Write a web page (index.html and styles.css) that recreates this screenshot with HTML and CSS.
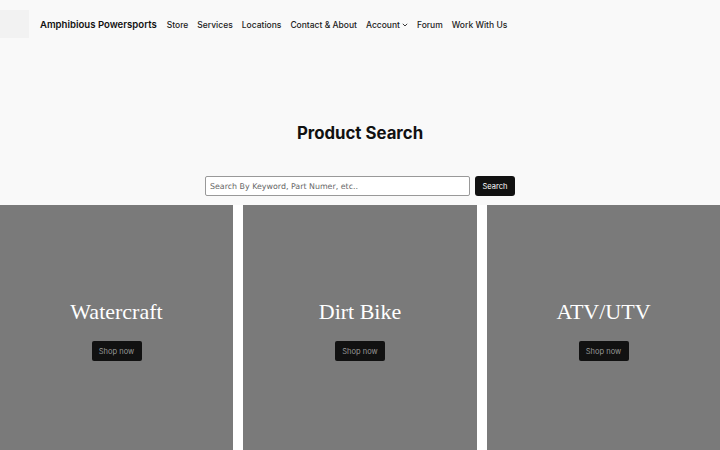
FILE: index.html
```html
<!DOCTYPE html>
<html>
<head>
<meta charset="utf-8">
<link rel="stylesheet" href="styles.css">
</head>
<body>
<header class="site-header">
  <div class="logo"></div>
  <div class="site-title">Amphibious Powersports</div>
  <nav class="nav">
    <a>Store</a>
    <a>Services</a>
    <a>Locations</a>
    <a>Contact &amp; About</a>
    <a class="has-sub">Account <svg width="6" height="4" viewBox="0 0 6 4"><path d="M0.8 0.8 L3 3 L5.2 0.8" fill="none" stroke="#222" stroke-width="0.9"/></svg></a>
    <a>Forum</a>
    <a>Work With Us</a>
  </nav>
</header>
<main>
  <section class="search-section">
    <h1 class="search-title">Product Search</h1>
    <form class="search-form">
      <input class="search-input" type="text" placeholder="Search By Keyword, Part Numer, etc..">
      <button class="search-btn" type="button">Search</button>
    </form>
  </section>
  <section class="cards">
    <div class="card"><h2 class="card-title">Watercraft</h2><a class="shop-btn">Shop now</a></div>
    <div class="card"><h2 class="card-title">Dirt Bike</h2><a class="shop-btn">Shop now</a></div>
    <div class="card"><h2 class="card-title">ATV/UTV</h2><a class="shop-btn">Shop now</a></div>
  </section>
</main>
</body>
</html>
```
FILE: styles.css
```css
* { box-sizing: border-box; }
html, body { margin: 0; padding: 0; }
body {
  background: #f9f9f9;
  font-family: Inter, "Noto Sans", sans-serif;
  color: #111;
  width: 720px;
  height: 450px;
  overflow: hidden;
}
.site-header {
  display: flex;
  align-items: center;
  height: 48px;
}
.logo {
  width: 29px;
  height: 28px;
  background: #f2f2f2;
  margin-right: 11px;
}
.site-title {
  font-size: 9.6px;
  font-weight: 600;
  color: #111;
  margin-right: 10px;
  padding-top: 1px;
}
.nav {
  display: flex;
  gap: 9px;
  font-size: 8.5px;
  font-weight: 500;
  color: #222;
  padding-top: 1px;
}
.nav a { display: flex; align-items: center; gap: 2px; }
.search-section {
  display: flex;
  flex-direction: column;
  align-items: center;
  padding-top: 75px;
  height: 157px;
}
.search-title {
  margin: 0;
  font-size: 16.8px;
  font-weight: 700;
  line-height: 20px;
}
.search-form {
  display: flex;
  gap: 5px;
  margin-top: 33px;
}
.search-input {
  width: 265px;
  height: 20px;
  border: 1px solid #999;
  border-radius: 2px;
  background: #fff;
  font-family: "DejaVu Sans", sans-serif;
  font-size: 7.9px;
  padding: 0 4px;
  outline: none;
}
.search-input::placeholder { color: #666; }
.search-btn {
  width: 40px;
  height: 20px;
  background: #111;
  color: #fff;
  border: none;
  border-radius: 3px;
  font-family: Inter, "Liberation Sans", sans-serif;
  font-size: 7.5px;
  padding: 0;
}
.cards {
  display: grid;
  grid-template-columns: 233px 234px 233px;
  gap: 10px;
  background: #fff;
  height: 245px;
}
.card {
  background: #7a7a7a;
  display: flex;
  flex-direction: column;
  align-items: center;
  padding-top: 94px;
}
.card-title {
  margin: 0;
  font-family: "Liberation Serif", "Times New Roman", serif;
  font-weight: 400;
  font-size: 22px;
  line-height: 26px;
  color: #fff;
}
.shop-btn {
  margin-top: 16px;
  width: 50px;
  height: 20px;
  background: #111;
  border-radius: 2px;
  color: #999;
  font-family: Inter, "Liberation Sans", sans-serif;
  font-size: 7.5px;
  display: flex;
  align-items: center;
  justify-content: center;
}
```
